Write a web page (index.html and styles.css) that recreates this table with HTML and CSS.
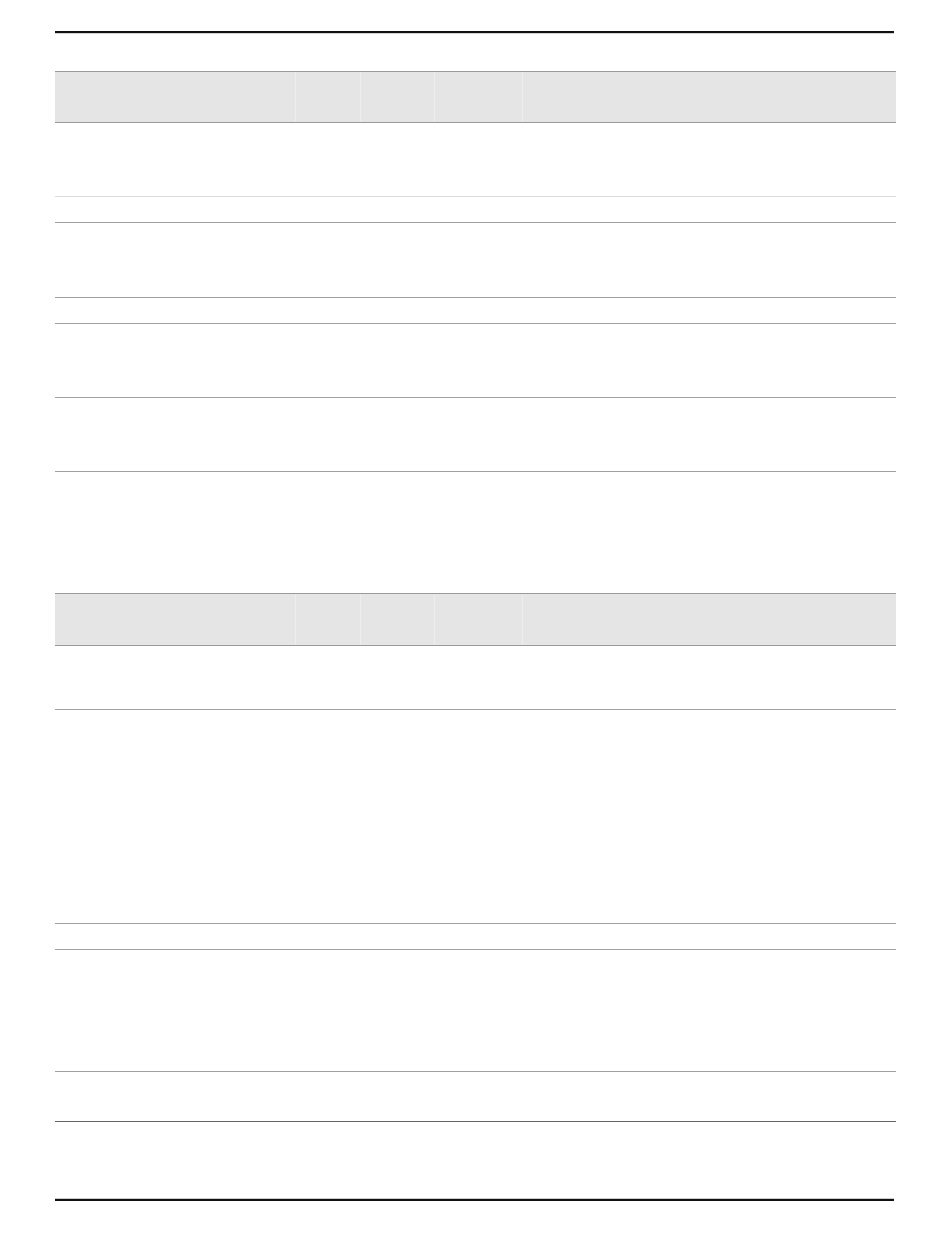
FILE: index.html
```html
<!DOCTYPE html>
<html lang="en">
<head>
    <meta charset="UTF-8">
    <meta name="viewport" content="width=device-width, initial-scale=1.0">
    <title>Table</title>
    <link rel="stylesheet" href="styles.css">
</head>
<body>
    <div class="page">
        <div class="rule-top"></div>

        <!-- first table -->
        <div class="table table-first">
            <div class="head">
                <div class="cell"></div>
                <div class="cell"></div>
                <div class="cell"></div>
                <div class="cell"></div>
                <div class="cell"></div>
            </div>
            <div class="row h73 light"></div>
            <div class="row h25"></div>
            <div class="row h74"></div>
            <div class="row h25"></div>
            <div class="row h73"></div>
            <div class="row h73"></div>
        </div>

        <!-- second table -->
        <div class="table table-second">
            <div class="head">
                <div class="cell"></div>
                <div class="cell"></div>
                <div class="cell"></div>
                <div class="cell"></div>
                <div class="cell"></div>
            </div>
            <div class="row h63"></div>
            <div class="row h213"></div>
            <div class="row h25"></div>
            <div class="row h121"></div>
            <div class="row h49 dark"></div>
        </div>

        <div class="rule-bottom"></div>
    </div>
</body>
</html>
```

FILE: styles.css
```css
body {
    margin: 0;
    font-family: "Liberation Sans", Arial, sans-serif;
    background-color: #fff;
}
.page {
    width: 841px;
    padding: 31px 0 0 55px;
}
.rule-top {
    width: 839px;
    height: 2px;
    background-color: #111;
    border-bottom: 1px solid #d0d0d0;
}
.table-first {
    margin-top: 37px;
}
.table-second {
    margin-top: 121px;
}
.head {
    display: grid;
    grid-template-columns: 240px 65px 74px 88px 1fr;
    height: 50px;
    background-color: #e5e5e5;
    border-top: 1px solid #9a9a9a;
    border-bottom: 1px solid #9a9a9a;
}
.head .cell + .cell {
    border-left: 1px solid #ededed;
}
.table-second .head {
    height: 51px;
}
.row {
    border-bottom: 1px solid #a0a0a0;
}
.row.light {
    border-bottom-color: #dcdcdc;
}
.row.dark {
    border-bottom-color: #666;
}
.h25 { height: 25px; }
.h49 { height: 49px; }
.h63 { height: 63px; }
.h73 { height: 73px; }
.h74 { height: 74px; }
.h121 { height: 121px; }
.h213 { height: 213px; }
.rule-bottom {
    margin-top: 76px;
    width: 839px;
    height: 0;
    border-top: 1px solid #ccc;
    border-bottom: 2px solid #111;
}
```
